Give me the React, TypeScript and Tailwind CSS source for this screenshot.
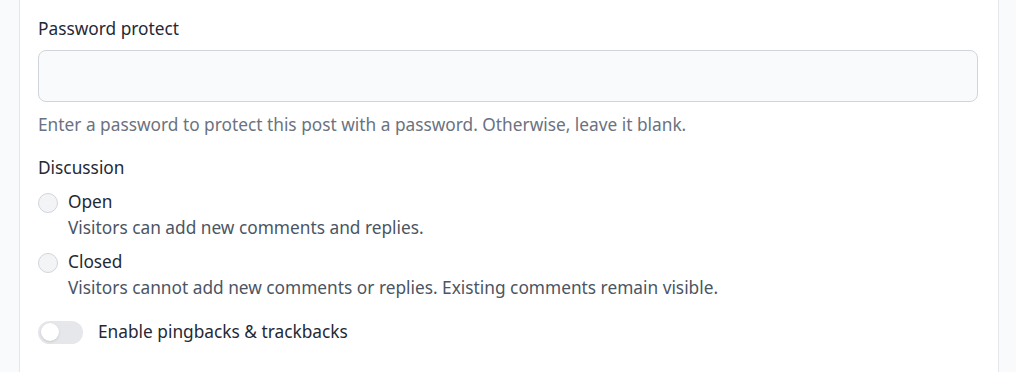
import { useState } from 'react';

const App = () => {
  const [discussion, setDiscussion] = useState<'open' | 'closed' | ''>('');
  const [pingbacks, setPingbacks] = useState(false);

  const options = [
    { id: 'open', label: 'Open', help: 'Visitors can add new comments and replies.' },
    { id: 'closed', label: 'Closed', help: 'Visitors cannot add new comments or replies. Existing comments remain visible.' },
  ] as const;

  return (
    <div
      className="flex h-[372px] w-full bg-[#f8fafc] text-[17.3px] leading-6 text-[#1f2937]"
      style={{ fontFamily: '"Noto Sans", "Open Sans", sans-serif' }}
    >
      <div className="w-[19px] shrink-0" />
      <div className="flex-1 border-x border-[#e5e7eb] bg-white pl-[18px] pr-5 pt-[17px]">
        {/* Password */}
        <label className="block">Password protect</label>
        <input
          type="password"
          className="mt-[9px] block h-[52px] w-full rounded-lg border border-[#d1d5db] bg-[#f9fafb] px-3 outline-none"
        />
        <p className="mt-[11px] text-[#6b7280]">
          Enter a password to protect this post with a password. Otherwise, leave it blank.
        </p>

        {/* Discussion */}
        <div className="mt-[19px]">Discussion</div>
        <div className="mt-2.5 flex flex-col gap-2.5">
          {options.map((opt) => (
            <label key={opt.id} className="flex cursor-pointer gap-[11px]">
              <span className="mt-[3px] flex h-5 w-5 shrink-0 items-center justify-center rounded-full border border-[#d1d5db] bg-[#f3f4f6]">
                {discussion === opt.id && <span className="h-2 w-2 rounded-full bg-[#2563eb]" />}
              </span>
              <input
                type="radio"
                name="discussion"
                className="hidden"
                checked={discussion === opt.id}
                onChange={() => setDiscussion(opt.id)}
              />
              <span className="-ml-px flex flex-col gap-0.5">
                <span>{opt.label}</span>
                <span className="text-[#4b5563]">{opt.help}</span>
              </span>
            </label>
          ))}
        </div>

        {/* Pingbacks */}
        <button
          type="button"
          onClick={() => setPingbacks(!pingbacks)}
          className="mt-5 flex items-center gap-[15px]"
        >
          <span
            className={`flex h-[23px] w-[45px] items-center rounded-full px-[3px] ${
              pingbacks ? 'justify-end bg-[#2563eb]' : 'justify-start bg-[#e5e7eb]'
            }`}
          >
            <span className="h-[18px] w-[18px] rounded-full bg-white shadow-sm" />
          </span>
          <span>Enable pingbacks &amp; trackbacks</span>
        </button>
      </div>
      <div className="w-[17px] shrink-0" />
    </div>
  );
};

export default App;
